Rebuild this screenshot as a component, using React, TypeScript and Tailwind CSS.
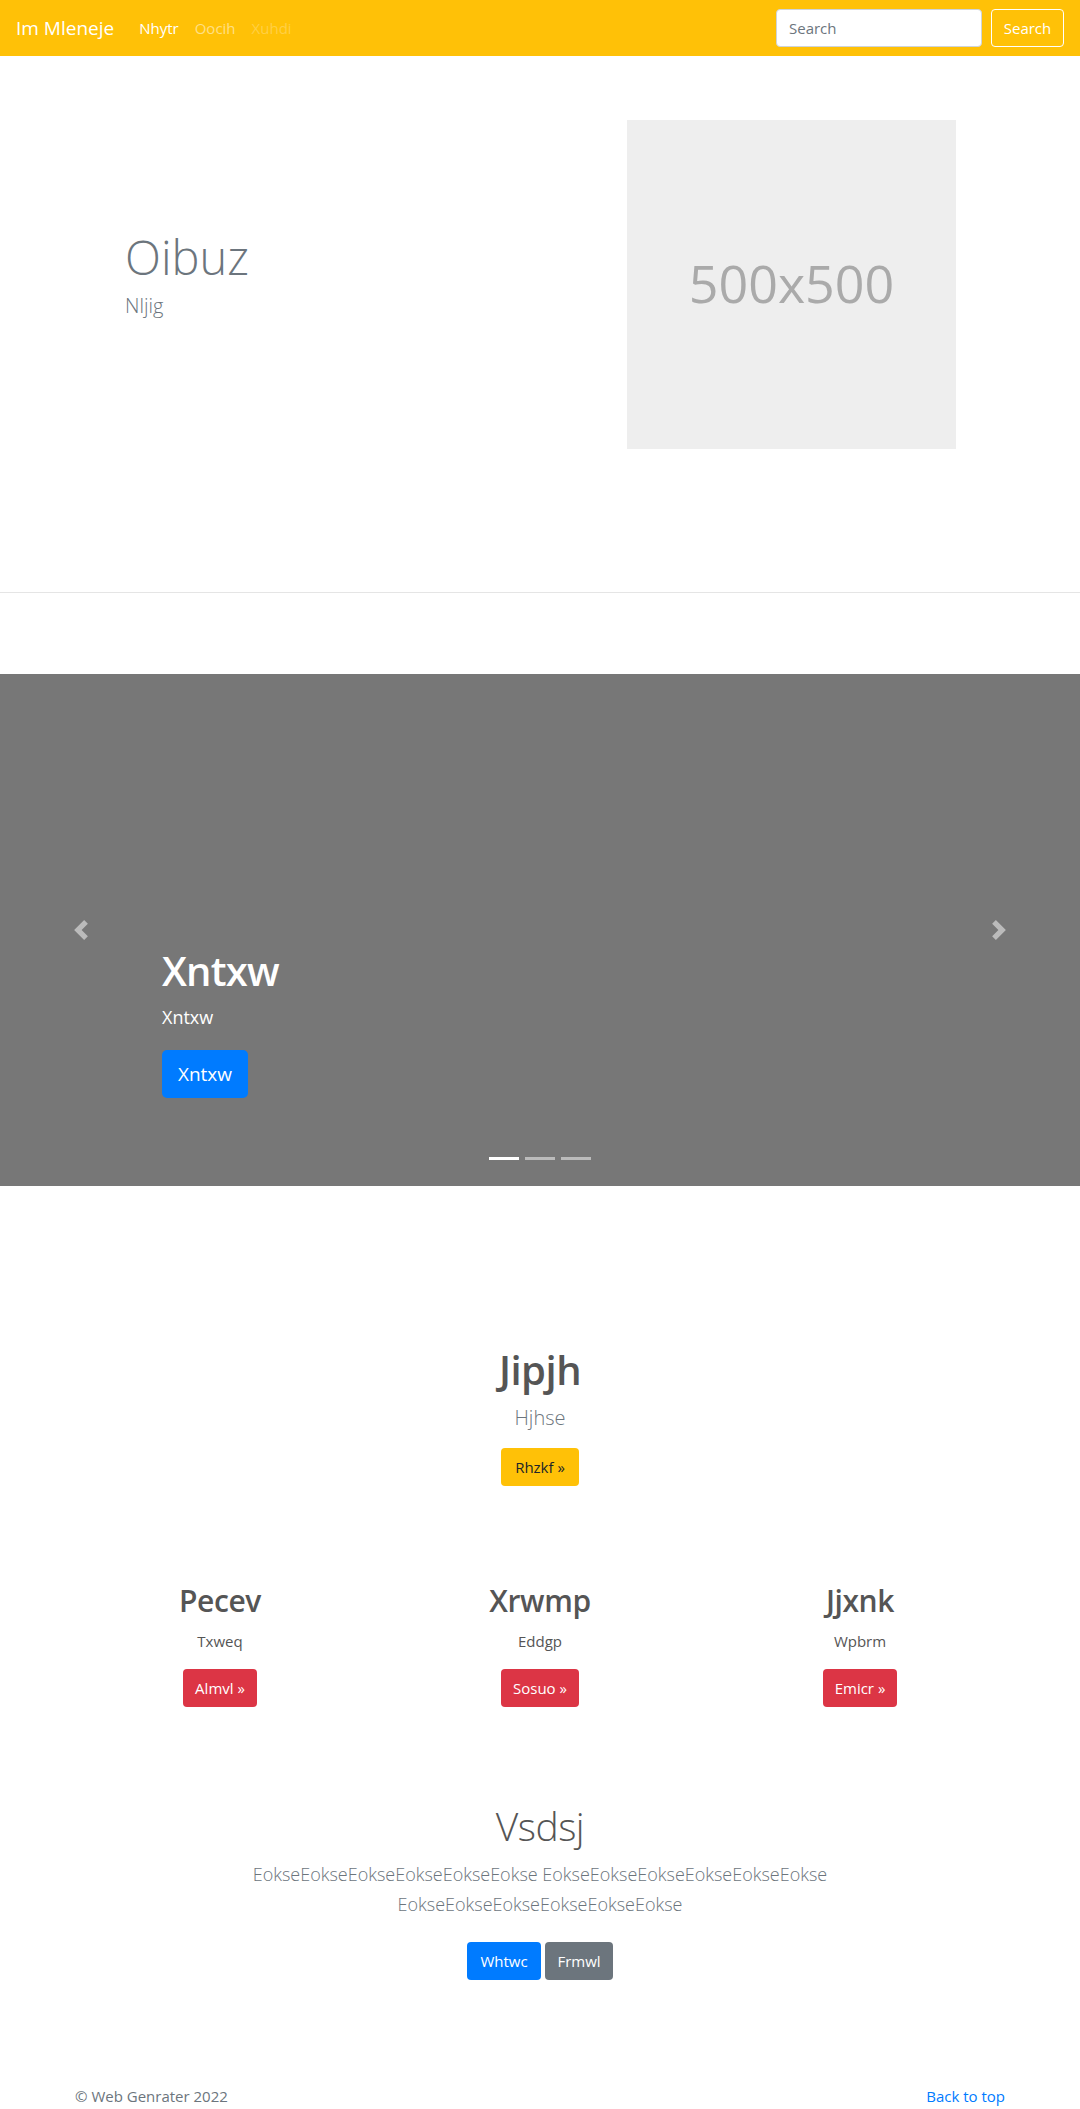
import React from "react";

function Chevron({ dir }: { dir: "prev" | "next" }) {
  return (
    <svg width="20" height="20" viewBox="0 0 8 8" fill="#fff">
      {dir === "prev" ? (
        <path d="M5.25 0l-4 4 4 4 1.5-1.5L4.25 4l2.5-2.5L5.25 0z" />
      ) : (
        <path d="M2.75 0l-1.5 1.5L3.75 4l-2.5 2.5L2.75 8l4-4-4-4z" />
      )}
    </svg>
  );
}

export default function App() {
  const cols = [
    { h: "Pecev", t: "Txweq", b: "Almvl »" },
    { h: "Xrwmp", t: "Eddgp", b: "Sosuo »" },
    { h: "Jjxnk", t: "Wpbrm", b: "Emicr »" },
  ];
  return (
    <div className="w-[1080px] min-h-[2109px] bg-white font-['Open_Sans','Noto_Sans',sans-serif] text-[#212529]">
      {/* Navbar */}
      <nav className="h-[56px] bg-[#ffc107] flex items-center pl-4 pr-4">
        <span className="text-[19px] leading-[30px] text-white mr-[17px]">Im Mleneje</span>
        <span className="px-2 text-[15px] leading-[24px] text-white">Nhytr</span>
        <span className="px-2 text-[15px] leading-[24px] text-white/50">Oocih</span>
        <span className="px-2 text-[15px] leading-[24px] text-white/25">Xuhdi</span>
        <div className="ml-auto flex items-center">
          <input
            placeholder="Search"
            className="w-[206px] h-[38px] rounded-[4px] border border-[#ced4da] bg-white px-3 text-[15px] text-[#495057] placeholder:text-[#6c757d] outline-none"
          />
          <button className="ml-[9px] h-[38px] w-[73px] rounded-[4px] border border-white text-white text-[15px] leading-[24px]">
            Search
          </button>
        </div>
      </nav>

      {/* Hero */}
      <section className="h-[536px]">
        <div className="w-[960px] mx-auto flex">
          <div className="w-[480px] pl-[65px] pt-[173px]">
            <h1 className="text-[47px] leading-[56px] font-light text-[#6c757d]">Oibuz</h1>
            <p className="mt-[6px] text-[20px] leading-[30px] font-light text-[#6c757d]">Nljig</p>
          </div>
          <div className="w-[480px] pt-[64px]">
            <div className="ml-[87px] w-[329px] h-[329px] bg-[#eeeeee] flex items-center justify-center">
              <span className="text-[52px] leading-none text-[#aaaaaa] -mt-[4px]">500x500</span>
            </div>
          </div>
        </div>
      </section>
      <hr className="border-0 border-t border-[#e5e5e5]" />

      {/* Carousel */}
      <section className="mt-[81px] h-[512px] bg-[#777777] relative">
        <div className="absolute left-0 top-0 bottom-0 w-[162px] flex items-center justify-center opacity-50">
          <Chevron dir="prev" />
        </div>
        <div className="absolute right-0 top-0 bottom-0 w-[162px] flex items-center justify-center opacity-50">
          <Chevron dir="next" />
        </div>
        <div className="absolute left-[162px] bottom-[88px] text-white">
          <h1 className="text-[40px] leading-[48px] font-semibold tracking-[-0.8px]">Xntxw</h1>
          <p className="mt-[9px] text-[18px] leading-[27px]">Xntxw</p>
          <button className="mt-[19px] h-[48px] w-[86px] rounded-[5px] bg-[#007bff] text-white text-[19px] leading-[30px]">
            Xntxw
          </button>
        </div>
        <div className="absolute left-0 right-0 bottom-[26px] flex justify-center gap-[6px]">
          <span className="w-[30px] h-[3px] bg-white" />
          <span className="w-[30px] h-[3px] bg-white/50" />
          <span className="w-[30px] h-[3px] bg-white/50" />
        </div>
      </section>

      {/* Feature */}
      <section className="pt-[160px] text-center">
        <h2 className="text-[40px] leading-[48px] font-semibold text-[#555555] tracking-[-0.5px]">Jipjh</h2>
        <p className="mt-[9px] text-[20px] leading-[30px] font-light text-[#6c757d]">Hjhse</p>
        <button className="mt-[15px] h-[38px] w-[78px] rounded-[4px] bg-[#ffc107] text-[#212529] text-[15px] leading-[24px]">
          Rhzkf »
        </button>
      </section>

      {/* Three columns */}
      <section className="mt-[96px]">
        <div className="w-[960px] mx-auto grid grid-cols-3">
          {cols.map((c) => (
            <div key={c.h} className="flex flex-col items-center">
              <h2 className="text-[30px] leading-[38px] font-semibold text-[#555555] tracking-[-0.4px]">{c.h}</h2>
              <p className="mt-[9px] text-[15px] leading-[24px] text-[#555555]">{c.t}</p>
              <button className="mt-[16px] h-[38px] px-3 rounded-[4px] bg-[#dc3545] text-white text-[15px] leading-[24px]">
                {c.b}
              </button>
            </div>
          ))}
        </div>
      </section>

      {/* Jumbotron */}
      <section className="mt-[95px] text-center">
        <div className="w-[640px] mx-auto px-[15px]">
          <h1 className="text-[39px] leading-[48px] font-light text-[#555555] tracking-[-0.5px]">Vsdsj</h1>
          <p className="mt-[9px] text-[18px] leading-[30px] font-light text-[#6c757d]">
            EokseEokseEokseEokseEokseEokse EokseEokseEokseEokseEokseEokse EokseEokseEokseEokseEokseEokse
          </p>
          <div className="mt-[23px] flex justify-center gap-[4px]">
            <button className="h-[38px] w-[74px] rounded-[4px] bg-[#007bff] text-white text-[15px] leading-[24px]">Whtwc</button>
            <button className="h-[38px] w-[68px] rounded-[4px] bg-[#6c757d] text-white text-[15px] leading-[24px]">Frmwl</button>
          </div>
        </div>
      </section>

      {/* Footer */}
      <footer className="mt-[104px]">
        <div className="w-[930px] mx-auto flex justify-between text-[15px] leading-[24px]">
          <span className="text-[#6c757d]">© Web Genrater 2022</span>
          <span className="text-[#007bff]">Back to top</span>
        </div>
      </footer>
    </div>
  );
}
